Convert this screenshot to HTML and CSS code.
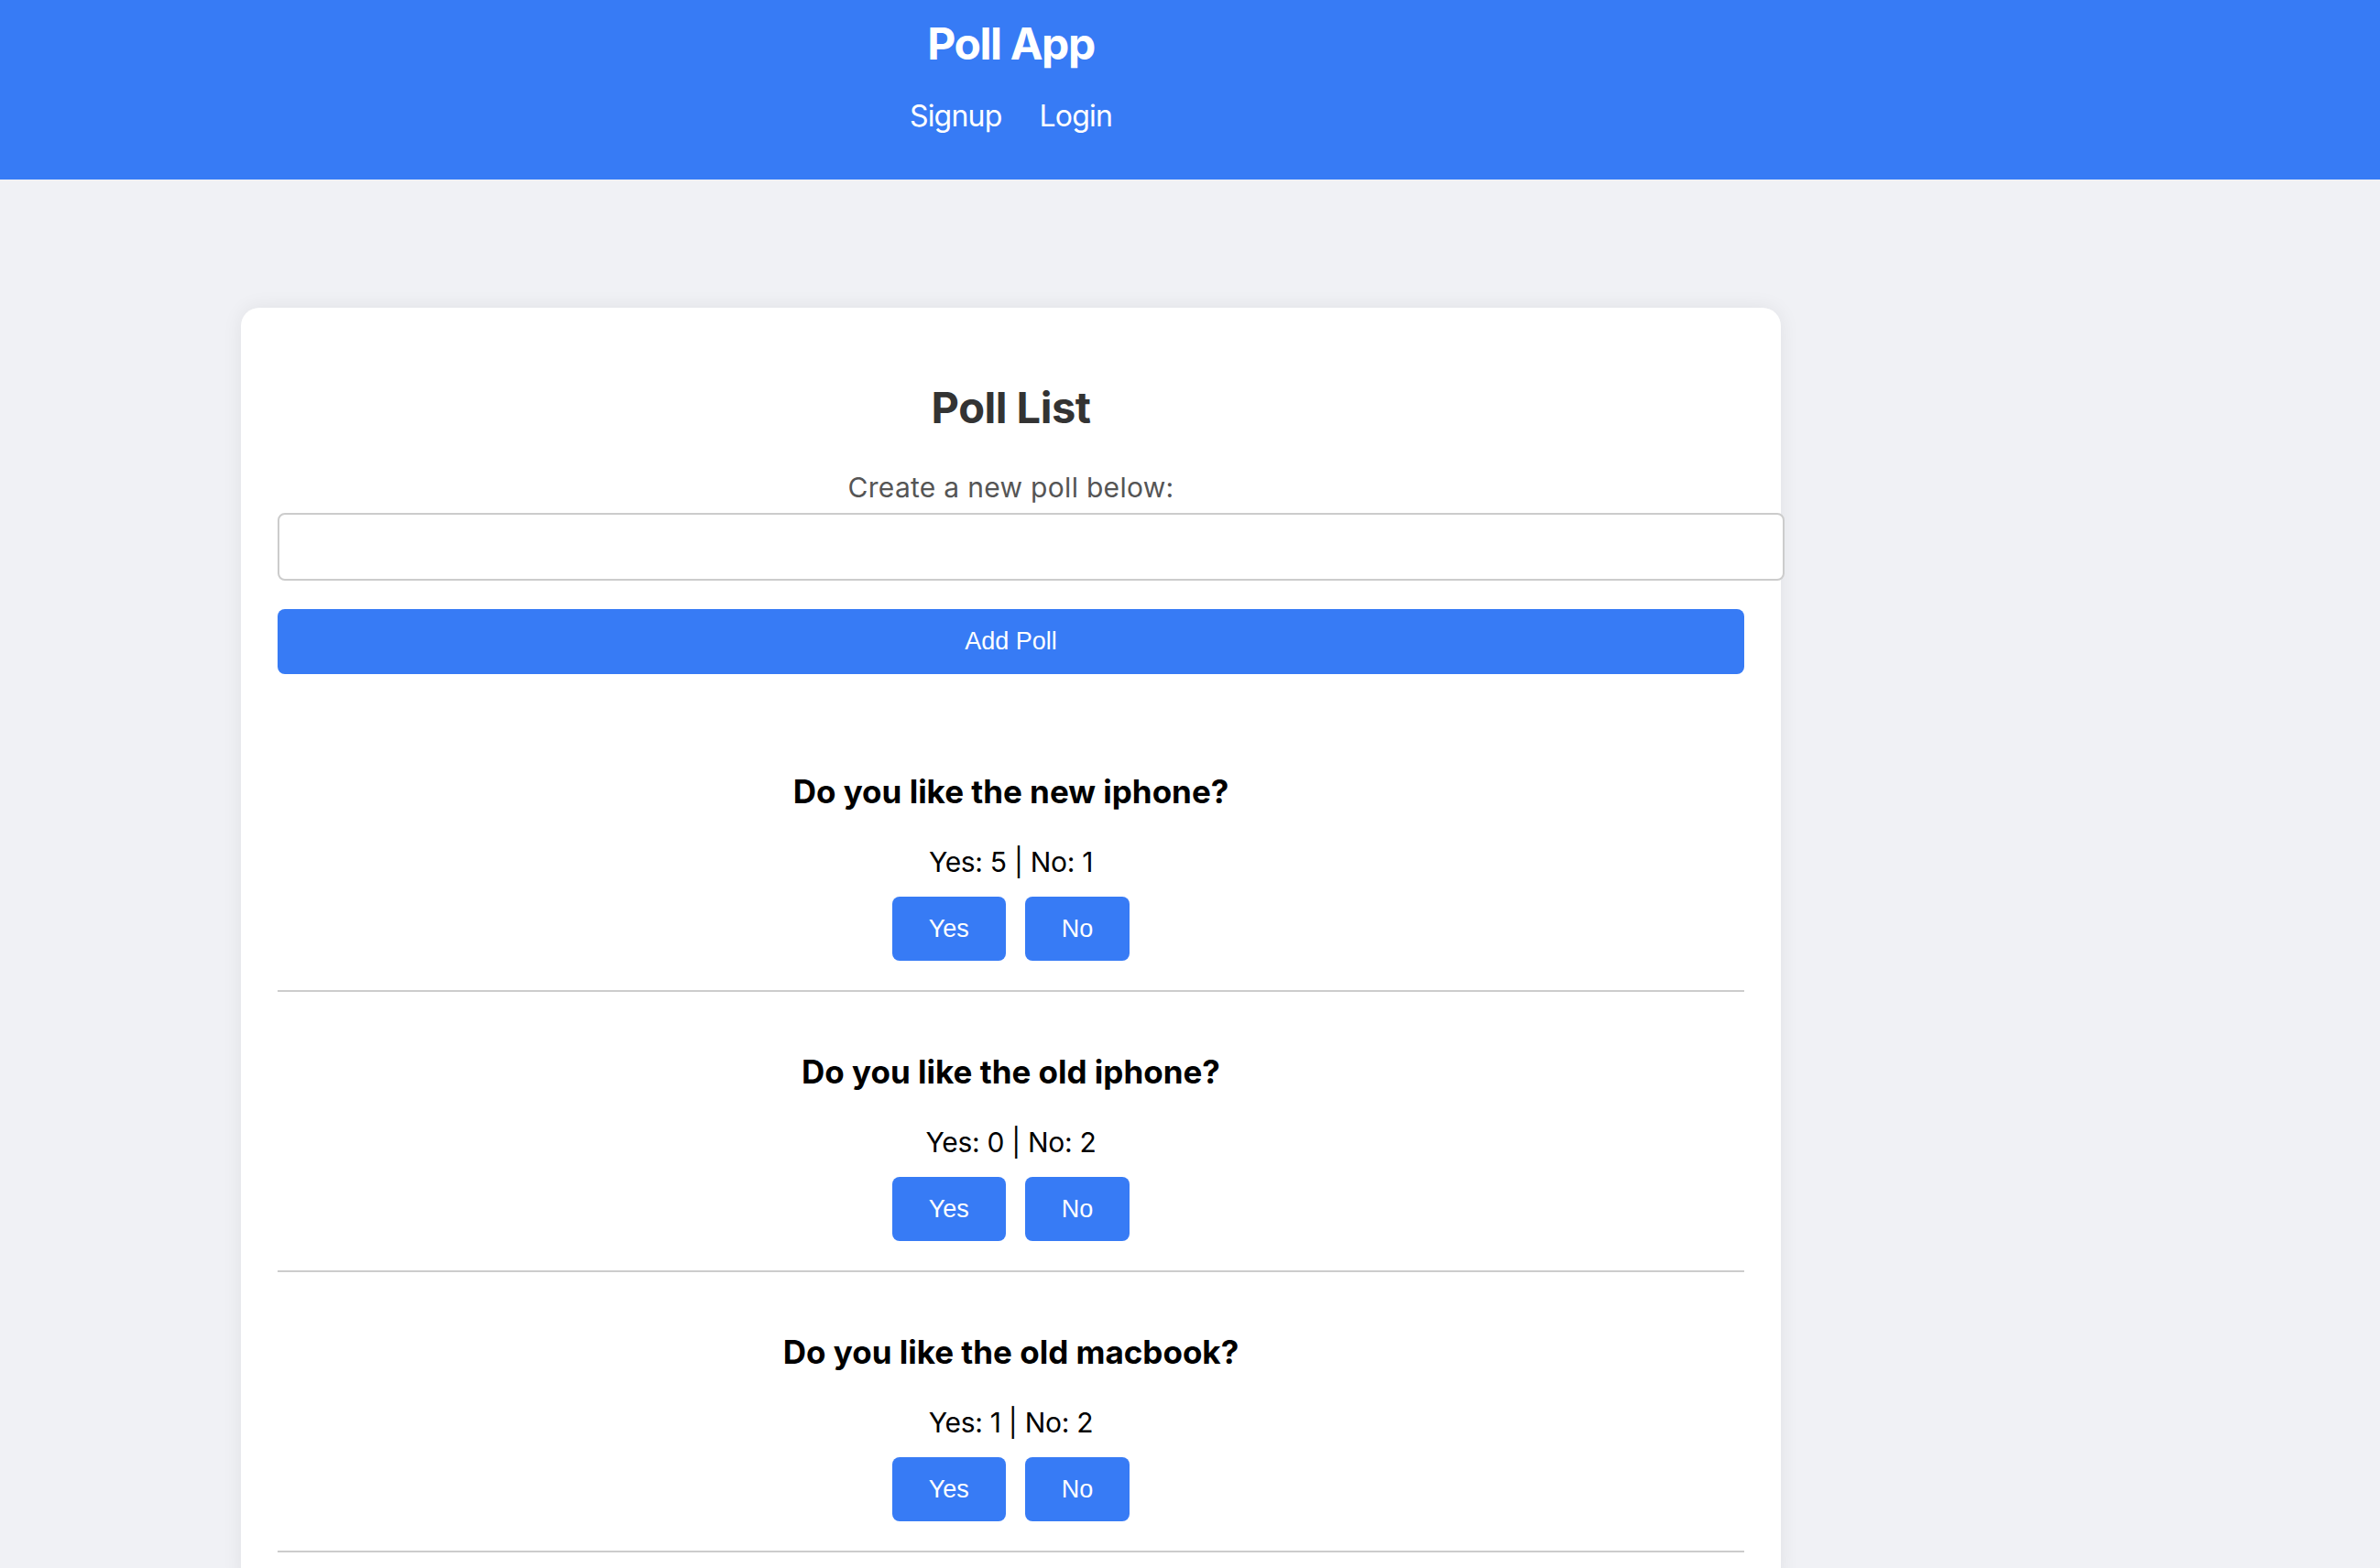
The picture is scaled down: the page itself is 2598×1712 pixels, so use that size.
FILE: index.html
```html
<!DOCTYPE html>
<html lang="en">
<head>
<meta charset="utf-8">
<title>Poll App</title>
<link rel="stylesheet" href="styles.css">
</head>
<body>
<header class="topbar">
  <div class="topbar-inner">
    <h1 class="brand">Poll App</h1>
    <nav class="nav">
      <a class="nav-link" href="#">Signup</a>
      <a class="nav-link" href="#">Login</a>
    </nav>
  </div>
</header>
<main class="main">
  <section class="card">
    <h2 class="card-title">Poll List</h2>
    <p class="card-sub">Create a new poll below:</p>
    <input class="poll-input" type="text">
    <button class="add-btn">Add Poll</button>
    <div class="poll-list">
      <div class="poll">
        <h3 class="poll-q">Do you like the new iphone?</h3>
        <p class="poll-votes">Yes: 5 | No: 1</p>
        <div class="poll-actions">
          <button class="vote-btn">Yes</button>
          <button class="vote-btn">No</button>
        </div>
      </div>
      <div class="poll">
        <h3 class="poll-q">Do you like the old iphone?</h3>
        <p class="poll-votes">Yes: 0 | No: 2</p>
        <div class="poll-actions">
          <button class="vote-btn">Yes</button>
          <button class="vote-btn">No</button>
        </div>
      </div>
      <div class="poll">
        <h3 class="poll-q">Do you like the old macbook?</h3>
        <p class="poll-votes">Yes: 1 | No: 2</p>
        <div class="poll-actions">
          <button class="vote-btn">Yes</button>
          <button class="vote-btn">No</button>
        </div>
      </div>
    </div>
  </section>
</main>
</body>
</html>
```

FILE: styles.css
```css
* { box-sizing: border-box; }

html, body {
  margin: 0;
  padding: 0;
}

body {
  background: #f0f1f5;
  font-family: Inter, "Noto Sans", sans-serif;
  color: #000;
}

.topbar {
  background: #377bf5;
  height: 196px;
}

.topbar-inner {
  width: 2207px;
  padding-top: 19px;
  text-align: center;
}

.brand {
  margin: 0 0 30px;
  font-size: 48px;
  line-height: 58px;
  font-weight: 700;
  color: #fff;
  letter-spacing: -1.4px;
}

.nav {
  display: flex;
  justify-content: center;
  gap: 41px;
}

.nav-link {
  font-size: 32px;
  line-height: 40px;
  color: #fff;
  text-decoration: none;
  letter-spacing: -0.8px;
}

.main {
  width: 2207px;
  padding-top: 140px;
}

.card {
  width: 1681px;
  margin: 0 auto;
  padding: 40px 40px 40px;
  background: #fff;
  border-radius: 20px;
  box-shadow: 0 0 22px rgba(0, 0, 0, 0.07);
  text-align: center;
}

.card-title {
  margin: 41px 0 0;
  font-size: 47px;
  line-height: 56px;
  font-weight: 700;
  color: #333;
  letter-spacing: -0.5px;
}

.card-sub {
  margin: 42px 0 10px;
  font-size: 30px;
  line-height: 35px;
  color: #555;
  letter-spacing: 0.3px;
}

.poll-input {
  display: block;
  box-sizing: content-box;
  width: 100%;
  height: 30px;
  padding: 20px;
  margin: 0;
  border: 2px solid #ccc;
  border-radius: 8px;
  font-family: "Liberation Sans", Arial, sans-serif;
  font-size: 26px;
  background: #fff;
}

.add-btn {
  display: block;
  width: 100%;
  height: 71px;
  margin: 31px 0 0;
  border: none;
  border-radius: 8px;
  background: #377bf5;
  color: #fff;
  font-family: "Liberation Sans", Arial, sans-serif;
  font-size: 27px;
}

.poll-list {
  margin-top: 41px;
}

.poll {
  padding: 66px 0 32px;
  border-bottom: 2px solid #ccc;
}

.poll-q {
  margin: 0 0 38px;
  font-size: 35px;
  line-height: 42px;
  font-weight: 700;
  letter-spacing: 0;
}

.poll-votes {
  margin: 0 0 20px;
  font-size: 30px;
  line-height: 36px;
  letter-spacing: -0.3px;
}

.poll-actions {
  display: flex;
  justify-content: center;
  gap: 21px;
}

.vote-btn {
  height: 70px;
  padding: 0 40px;
  border: none;
  border-radius: 8px;
  background: #377bf5;
  color: #fff;
  font-family: "Liberation Sans", Arial, sans-serif;
  font-size: 27px;
}
```
